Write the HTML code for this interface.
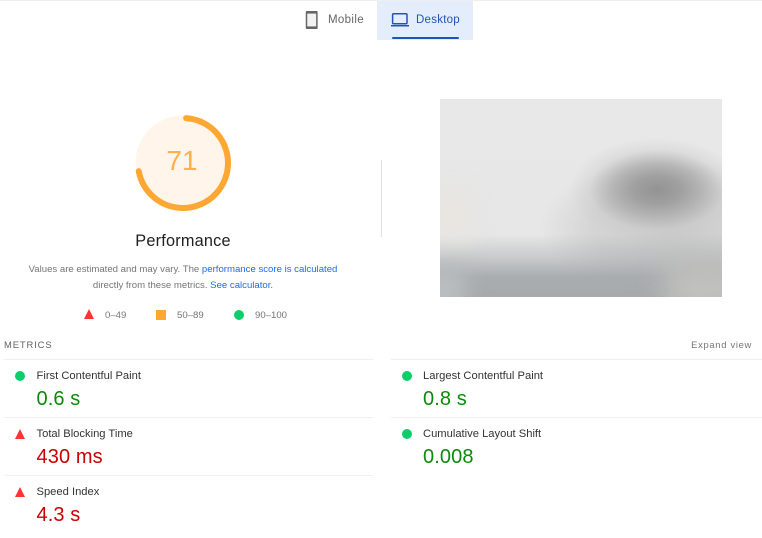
<!DOCTYPE html>
<html><head><meta charset="utf-8">
<style>
html,body{margin:0;padding:0;background:#fff;width:762px;height:538px;overflow:hidden}
body{font-family:"Liberation Sans",sans-serif;position:relative}
.a{position:absolute;white-space:nowrap}
.t{filter:blur(.3px)}
.hr{position:absolute;height:1px;background:#f0f0f0}
.name{font-size:11.2px;color:#333;line-height:14px}
.val{font-size:20px;line-height:24px;letter-spacing:.1px}
.g{color:#0c8a0c}.r{color:#c80000}
.dot{position:absolute;width:10px;height:10px;border-radius:50%;background:#0cce6b}
.tri{position:absolute;width:0;height:0;border-left:5px solid transparent;border-right:5px solid transparent;border-bottom:10px solid #ff3333}
</style></head><body>
<div class="hr" style="left:0;top:0;width:762px;background:#eee"></div>

<div class="a" style="left:377px;top:1px;width:96px;height:39px;background:#e4edfb"></div>
<div class="a" style="left:392px;top:37px;width:67px;height:2px;background:#1f55b8;border-radius:1px"></div>
<svg class="a t" style="left:303px;top:10px" width="18" height="20" viewBox="0 0 18 20"><rect x="3.5" y="1.7" width="10.4" height="16.6" rx="1.2" fill="#f2f2f2" stroke="#666" stroke-width="1.5"/><rect x="3" y="1" width="11.4" height="2.6" fill="#666"/><rect x="3" y="16.4" width="11.4" height="2.6" fill="#666"/></svg>
<div class="a t" style="left:328px;top:13px;font-size:11.5px;line-height:14px;color:#666;letter-spacing:.35px">Mobile</div>
<svg class="a t" style="left:390px;top:12px" width="20" height="16" viewBox="0 0 20 16"><rect x="2.6" y="1.8" width="14.4" height="10" rx="1" fill="none" stroke="#1f55b8" stroke-width="1.5"/><rect x="1" y="13" width="18" height="1.5" fill="#1f55b8"/></svg>
<div class="a t" style="left:416px;top:13px;font-size:11.5px;line-height:14px;color:#1f55b8;letter-spacing:.25px">Desktop</div>

<svg class="a" style="left:133px;top:112.5px" width="100" height="100" viewBox="0 0 100 100">
<circle cx="50" cy="50" r="47.5" fill="#fff5ea" stroke="none"/>
<circle cx="50" cy="50" r="45" fill="none" stroke="#ffa733" stroke-width="6" stroke-linecap="round" stroke-dasharray="200.3 300" transform="rotate(-86 50 50)"/>
</svg>
<div class="a t" style="left:133px;top:145px;width:98px;text-align:center;font-size:28px;line-height:31px;color:#ffb04a">71</div>
<div class="a t" style="left:83px;top:232px;width:200px;text-align:center;font-size:16.3px;line-height:19px;color:#212121;letter-spacing:.2px">Performance</div>
<div class="a t" style="left:3px;top:262px;width:360px;text-align:center;font-size:9.6px;line-height:16px;color:#757575">Values are estimated and may vary. The <span style="color:#1a6cf0">performance score is calculated</span><br>directly from these metrics. <span style="color:#1a6cf0">See calculator.</span></div>

<div class="tri" style="left:84px;top:309px"></div>
<div class="a t" style="left:105px;top:310px;font-size:9.6px;line-height:12px;color:#757575">0–49</div>
<div class="a" style="left:156px;top:310px;width:10px;height:10px;background:#ffa733"></div>
<div class="a t" style="left:177px;top:310px;font-size:9.6px;line-height:12px;color:#757575">50–89</div>
<div class="dot" style="left:234px;top:310px"></div>
<div class="a t" style="left:255px;top:310px;font-size:9.6px;line-height:12px;color:#757575">90–100</div>

<div class="a" style="left:381px;top:160px;width:1px;height:77px;background:#e0e0e0"></div>

<div class="a" style="left:440px;top:99px;width:282px;height:198px;overflow:hidden;background:
 linear-gradient(180deg,rgba(166,170,172,0) 135px,rgba(166,170,172,.45) 158px,rgba(166,170,172,.95) 178px,#a6aaac 198px),
 radial-gradient(ellipse 68px 40px at 217px 91px,#939393 0%,#a0a0a0 35%,rgba(175,175,175,.85) 65%,rgba(200,200,200,.35) 100%,rgba(200,200,200,0) 130%),
 radial-gradient(ellipse 130px 70px at 230px 130px,rgba(200,200,200,.9) 0%,rgba(205,205,205,.7) 60%,rgba(220,220,220,0) 100%),
 linear-gradient(180deg,#e8e8e8,#e6e6e6)">
 <div class="a" style="left:225px;top:160px;width:80px;height:60px;background:#c0c0bd;filter:blur(14px)"></div>
 <div class="a" style="left:-25px;top:168px;width:50px;height:50px;background:#b9bdbf;filter:blur(10px)"></div>
 <div class="a" style="left:-8px;top:90px;width:40px;height:50px;background:#e8e5e0;filter:blur(10px)"></div>
</div>

<div class="a t" style="left:4px;top:339px;font-size:9.4px;line-height:12px;color:#616161;letter-spacing:.9px">METRICS</div>
<div class="a t" style="right:10px;top:339px;font-size:9.4px;line-height:12px;color:#757575;letter-spacing:.7px">Expand view</div>

<div class="hr" style="left:4px;top:359px;width:369px"></div>
<div class="dot" style="left:15px;top:371px"></div>
<div class="a name t" style="left:36.5px;top:369px">First Contentful Paint</div>
<div class="a val g t" style="left:36.5px;top:387px">0.6 s</div>
<div class="hr" style="left:4px;top:417px;width:369px"></div>
<div class="tri" style="left:15px;top:429px"></div>
<div class="a name t" style="left:36.5px;top:427px">Total Blocking Time</div>
<div class="a val r t" style="left:36.5px;top:445px">430 ms</div>
<div class="hr" style="left:4px;top:475px;width:369px"></div>
<div class="tri" style="left:15px;top:487px"></div>
<div class="a name t" style="left:36.5px;top:485px">Speed Index</div>
<div class="a val r t" style="left:36.5px;top:503px">4.3 s</div>

<div class="hr" style="left:391px;top:359px;width:371px"></div>
<div class="dot" style="left:402px;top:371px"></div>
<div class="a name t" style="left:423px;top:369px">Largest Contentful Paint</div>
<div class="a val g t" style="left:423px;top:387px">0.8 s</div>
<div class="hr" style="left:391px;top:417px;width:371px"></div>
<div class="dot" style="left:402px;top:429px"></div>
<div class="a name t" style="left:423px;top:427px">Cumulative Layout Shift</div>
<div class="a val g t" style="left:423px;top:445px">0.008</div>
</body></html>
